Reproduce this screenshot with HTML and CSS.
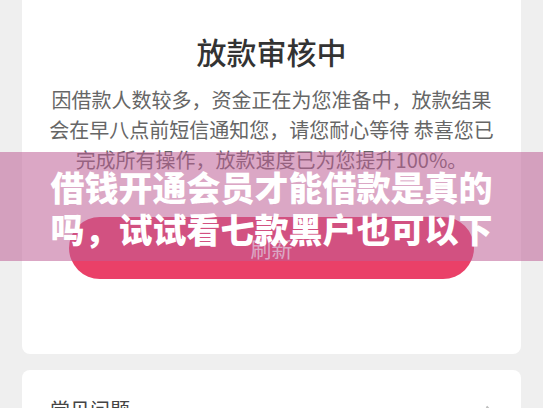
FILE: index.html
```html
<!DOCTYPE html>
<html lang="zh-CN">
<head>
  <meta charset="UTF-8">
  <meta name="viewport" content="width=device-width, initial-scale=1.0">
  <title>放款审核中</title>
  <link rel="stylesheet" href="styles.css">
</head>
<body>
  <div class="page">
    <!-- Loan status card -->
    <div class="card status">
      <svg class="status-icon" width="120" height="42" viewBox="0 0 120 42">
        <ellipse cx="86" cy="22" rx="19" ry="17" fill="#f9f3da" />
      </svg>
      <h1 class="status-title">放款审核中</h1>
      <p class="status-text">
        因借款人数较多，资金正在为您准备中，放款结果<br>
        会在早八点前短信通知您，请您耐心等待 恭喜您已<br>
        完成所有操作，放款速度已为您提升100%。
      </p>
      <button class="btn-refresh">刷新</button>
    </div>

    <!-- FAQ entry -->
    <div class="card faq">
      <span class="faq-label">常见问题</span>
      <svg class="faq-arrow" width="10" height="18" viewBox="0 0 10 18">
        <path d="M1.5 1.5 L8.5 9 L1.5 16.5" fill="none" stroke="#bdbdbd" stroke-width="2" />
      </svg>
    </div>
  </div>

  <!-- Headline banner over the page -->
  <div class="banner">
    借钱开通会员才能借款是真的<br>
    吗，试试看七款黑户也可以下
  </div>
</body>
</html>
```

FILE: styles.css
```css
/* General styles */
body {
  margin: 0;
  font-family: "Noto Sans CJK SC", "Noto Sans", sans-serif;
  background-color: #efefef;
  color: #333333;
}

.page {
  padding: 0 22px;
}

/* Cards */
.card {
  background-color: #ffffff;
  border-radius: 8px;
}

.status {
  margin-top: -40px;
  padding: 0 0 75px;
  display: flex;
  flex-direction: column;
  align-items: center;
  text-align: center;
}

.status-icon {
  display: block;
}

.status-title {
  margin: 31px 0 0;
  font-size: 30px;
  line-height: 36px;
  font-weight: 500;
  color: #333333;
}

.status-text {
  margin: 16px 0 0;
  font-size: 20px;
  line-height: 30px;
  color: #666666;
}

/* Refresh button */
.btn-refresh {
  margin-top: 42px;
  width: 405px;
  height: 62px;
  border: none;
  border-radius: 31px;
  background-color: #ea4068;
  color: #ffffff;
  font-family: inherit;
  font-size: 21px;
  cursor: pointer;
}

/* FAQ row */
.faq {
  margin-top: 16px;
  padding: 26px 26px 20px 28px;
  display: flex;
  justify-content: space-between;
  align-items: center;
}

.faq-label {
  font-size: 20px;
  line-height: 28px;
  color: #444444;
}

.faq-arrow {
  margin-top: 8px;
}

/* Banner over the content */
.banner {
  position: absolute;
  top: 152px;
  left: 0;
  right: 0;
  height: 109px;
  box-sizing: border-box;
  padding-top: 14px;
  background: rgba(190, 95, 150, 0.55);
  color: #ffffff;
  font-size: 34px;
  line-height: 42px;
  font-weight: 900;
  text-align: center;
}
```
